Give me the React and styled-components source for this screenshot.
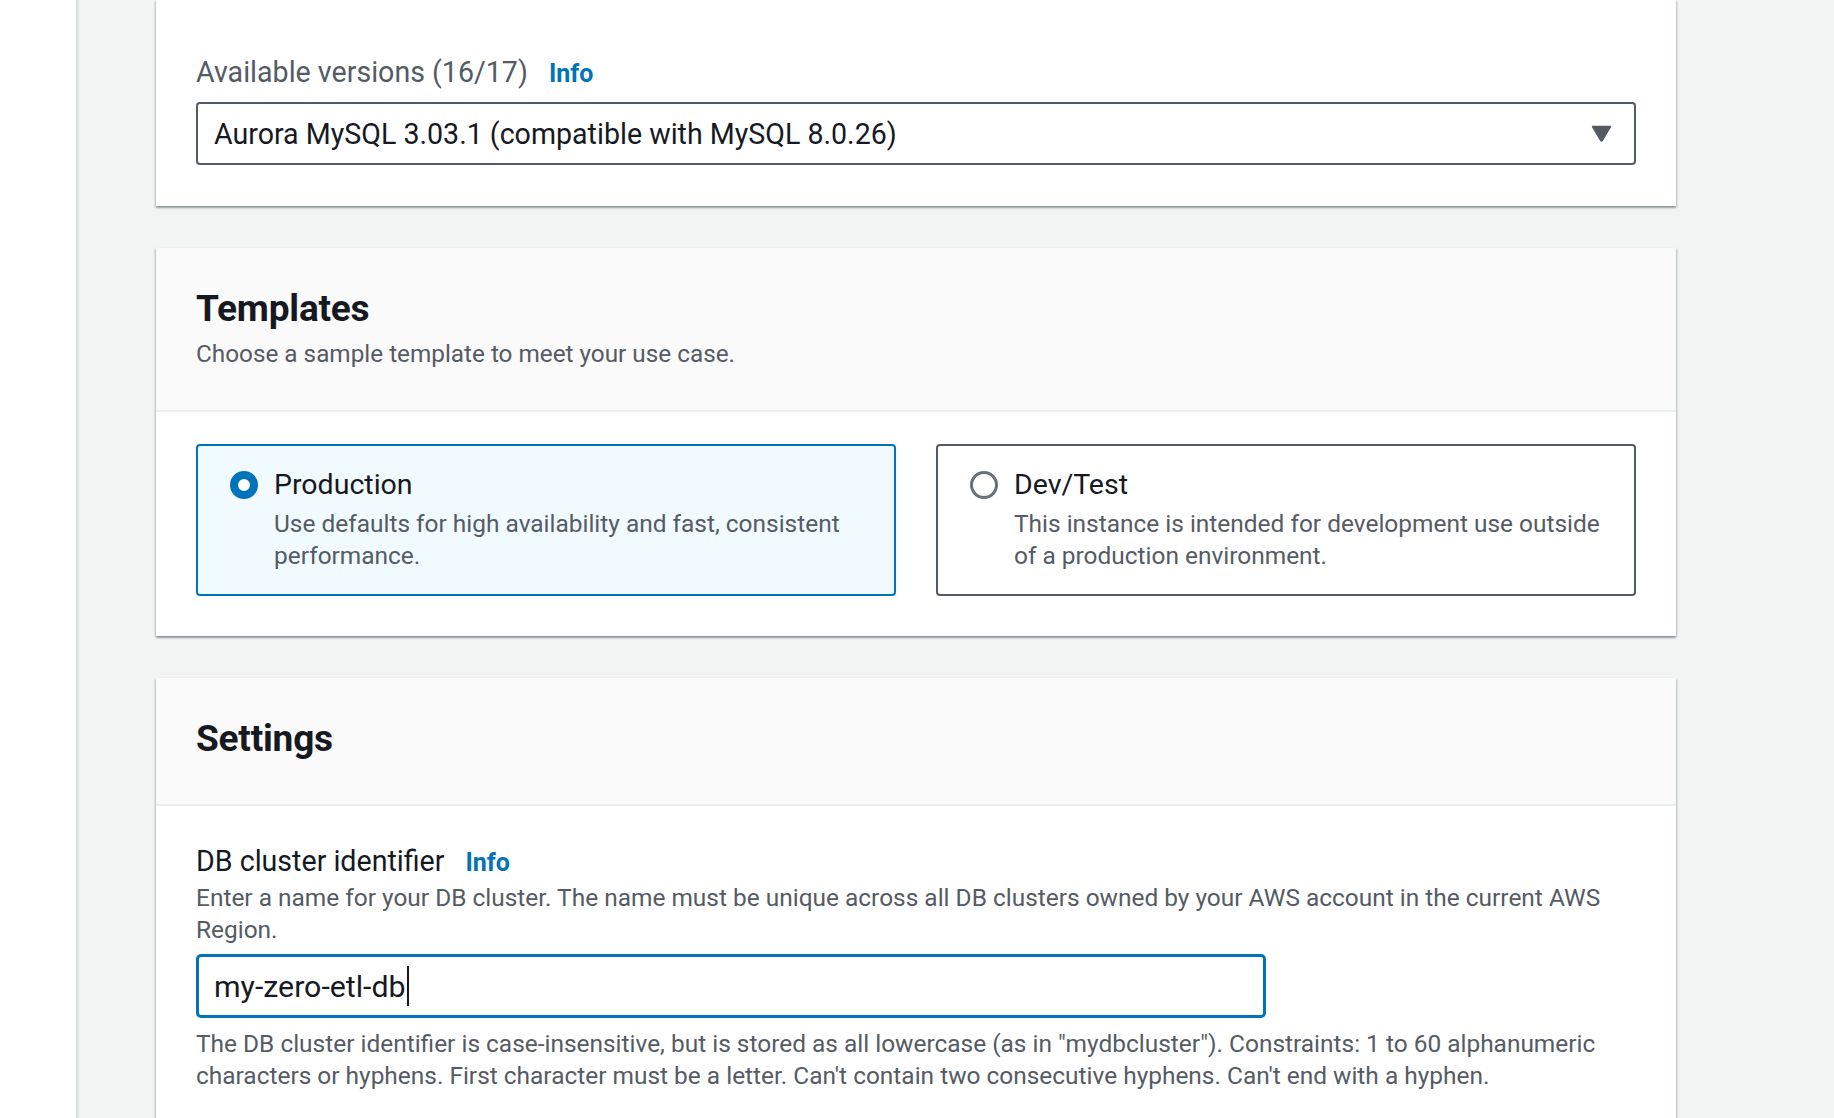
import React from 'react'
import styled, { createGlobalStyle } from 'styled-components'

const GlobalStyle = createGlobalStyle`
  html, body {
    margin: 0;
    padding: 0;
    background: #f2f3f3;
    font-family: Roboto, "Liberation Sans", Arial, sans-serif;
    color: #16191f;
    overflow: hidden;
  }
  * { box-sizing: border-box; }
`

const Page = styled.div`
  display: flex;
  min-height: 100vh;
`

const SideStrip = styled.div`
  width: 77px;
  flex-shrink: 0;
  background: #ffffff;
  border-right: 1px solid #d5dbdb;
  box-shadow: 1px 0 2px rgba(0, 28, 36, 0.12);
`

const Main = styled.main`
  flex: 1;
  padding-left: 79px;
  display: flex;
  flex-direction: column;
  gap: 42px;
`

const Card = styled.section`
  width: 1520px;
  background: #ffffff;
  box-shadow: 0 2px 2px 0 rgba(0, 28, 36, 0.3), 1px 1px 2px 0 rgba(0, 28, 36, 0.15),
    -1px 1px 2px 0 rgba(0, 28, 36, 0.15);
`

const CardHeader = styled.header`
  background: #fafafa;
  padding: 40px 40px ${(p) => p.$bottom || 40}px;
  border-bottom: 2px solid #eaeded;
`

const Heading = styled.h2`
  margin: 0;
  font-size: 37px;
  line-height: 42px;
  font-weight: 700;
  letter-spacing: -0.2px;
  color: #16191f;
`

const HeaderDesc = styled.p`
  margin: 8px 0 0;
  font-size: 24.3px;
  line-height: 32px;
  color: #545b64;
`

const CardBody = styled.div`
  padding: ${(p) => p.$pad || '32px 40px 40px'};
`

const LabelRow = styled.div`
  display: flex;
  align-items: center;
  gap: 21px;
  height: 32px;
`

const Label = styled.span`
  font-size: 28.6px;
  line-height: 32px;
  color: ${(p) => (p.$muted ? '#545b64' : '#16191f')};
`

const Info = styled.a`
  font-size: 25px;
  font-weight: 700;
  color: #0073bb;
  text-decoration: none;
  line-height: 32px;
  padding-top: 3px;
`

const Desc = styled.p`
  margin: ${(p) => p.$margin || '0'};
  font-size: 24.45px;
  line-height: 32px;
  color: #545b64;
`

const Select = styled.div`
  margin-top: 14px;
  height: 63px;
  border: 2px solid #545b64;
  border-radius: 4px;
  display: flex;
  align-items: center;
  justify-content: space-between;
  padding: 0 22px 0 16px;
  font-size: 28.6px;
  color: #16191f;
`

const Tiles = styled.div`
  display: grid;
  grid-template-columns: 1fr 1fr;
  gap: 40px;
`

const Tile = styled.div`
  border: 2px solid ${(p) => (p.$selected ? '#0073bb' : '#545b64')};
  background: ${(p) => (p.$selected ? '#f1faff' : '#ffffff')};
  border-radius: 4px;
  padding: 22px 24px 23px 32px;
  display: flex;
  gap: 16px;
  height: 152px;
`

const Radio = styled.span`
  width: 28px;
  height: 28px;
  flex-shrink: 0;
  margin-top: 3px;
  border-radius: 50%;
  background: #ffffff;
  border: ${(p) => (p.$checked ? '8px solid #0073bb' : '3px solid #687078')};
`

const TileText = styled.div`
  display: flex;
  flex-direction: column;
  gap: 6px;
`

const TileTitle = styled.div`
  font-size: 28.5px;
  line-height: 34px;
  color: #16191f;
`

const Input = styled.div`
  margin-top: 8px;
  width: 1070px;
  height: 64px;
  border: 3px solid #0073bb;
  border-radius: 5px;
  display: flex;
  align-items: center;
  padding-left: 15px;
  font-size: 30.3px;
  color: #16191f;
`

const Caret = styled.span`
  display: inline-block;
  width: 2px;
  height: 40px;
  background: #16191f;
  margin-left: 1px;
`

const App = () => {
  return (
    <>
      <GlobalStyle />
      <Page>
        <SideStrip />
        <Main>
          <Card>
            <CardBody $pad="56px 40px 41px">
              <LabelRow>
                <Label $muted>Available versions (16/17)</Label>
                <Info>Info</Info>
              </LabelRow>
              <Select>
                <span>Aurora MySQL 3.03.1 (compatible with MySQL 8.0.26)</span>
                <svg width="21" height="17" viewBox="0 0 21 17">
                  <path d="M1.5 1.5 H19.5 L11.2 15.6 Q10.5 16.6 9.8 15.6 Z" fill="#545b64" stroke="#545b64" strokeWidth="1.5" strokeLinejoin="round" />
                </svg>
              </Select>
            </CardBody>
          </Card>

          <Card>
            <CardHeader>
              <Heading>Templates</Heading>
              <HeaderDesc>Choose a sample template to meet your use case.</HeaderDesc>
            </CardHeader>
            <CardBody>
              <Tiles>
                <Tile $selected>
                  <Radio $checked />
                  <TileText>
                    <TileTitle>Production</TileTitle>
                    <Desc>Use defaults for high availability and fast, consistent performance.</Desc>
                  </TileText>
                </Tile>
                <Tile>
                  <Radio />
                  <TileText>
                    <TileTitle>Dev/Test</TileTitle>
                    <Desc>This instance is intended for development use outside of a production environment.</Desc>
                  </TileText>
                </Tile>
              </Tiles>
            </CardBody>
          </Card>

          <Card>
            <CardHeader $bottom={44}>
              <Heading>Settings</Heading>
            </CardHeader>
            <CardBody $pad="39px 40px 60px">
              <LabelRow>
                <Label>DB cluster identifier</Label>
                <Info>Info</Info>
              </LabelRow>
              <Desc $margin="5px 0 0">
                Enter a name for your DB cluster. The name must be unique across all DB clusters owned by your AWS account in the current AWS Region.
              </Desc>
              <Input>
                my-zero-etl-db
                <Caret />
              </Input>
              <Desc $margin="10px 0 0">
                The DB cluster identifier is case-insensitive, but is stored as all lowercase (as in "mydbcluster"). Constraints: 1 to 60 alphanumeric characters or hyphens. First character must be a letter. Can't contain two consecutive hyphens. Can't end with a hyphen.
              </Desc>
            </CardBody>
          </Card>
        </Main>
      </Page>
    </>
  )
}

export default App
